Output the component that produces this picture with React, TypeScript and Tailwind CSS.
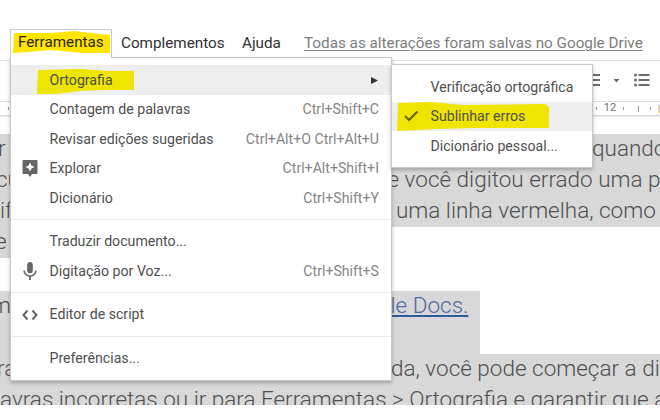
import React from 'react';

type ItemProps = { label: string; keys?: string; icon?: React.ReactNode; active?: boolean; children?: React.ReactNode };

function Item({ label, keys, icon, active, children }: ItemProps) {
  return (
    <div className={`relative flex h-[29.5px] items-center pr-[12px] text-[14.15px] ${active ? 'bg-[#eeeeee]' : ''}`}>
      {children}
      <div className="relative flex w-[38.5px] shrink-0 justify-center text-[#666]">{icon}</div>
      <span className="relative grow pt-[1.5px] text-[#4f4f4f]">{label}</span>
      {keys && <span className="pt-[1.5px] text-[#858585]">{keys}</span>}
    </div>
  );
}

function Separator() {
  return <div className="my-[6.5px] h-px bg-[#ebebeb]" />;
}

function DocLine({ left, right, offset, className = '' }: { left: string; right: string; offset: string; className?: string }) {
  return (
    <div className={`flex h-[31px] w-full shrink-0 overflow-hidden bg-[#d8d8d8] ${className}`}>
      <span className={`shrink-0 ${offset}`}>{left}</span>
      <span>{right}</span>
    </div>
  );
}

function MenuBar() {
  return (
    <div className="flex h-[60px] shrink-0 items-end whitespace-pre pl-[121px] text-[15.25px] text-[#303030]">
      <span className="mb-[5px] w-[121px]">Complementos</span>
      <span className="mb-[5px] w-[62px]">Ajuda</span>
      <span className="mb-[5px] text-[#7d7d7d] underline decoration-1 underline-offset-2">Todas as alterações foram salvas no Google Drive</span>
    </div>
  );
}

function Toolbar() {
  return (
    <div className="flex h-[41px] shrink-0 items-center justify-end border-t border-[#e0e0e0] pr-[8px]">
      <svg width="68" height="18" viewBox="0 0 68 18" fill="#6c6c6c">
        <path d="M0 2h16v2H0zM0 7h16v2H0zM0 12h16v2H0zM29.500 7h6l-3 3.500zM54.500 2h11v2h-11zM54.500 7h11v2h-11zM54.500 12h11v2h-11z" />
        <circle cx="51.500" cy="3" r="1.500" /><circle cx="51.500" cy="8" r="1.500" /><circle cx="51.500" cy="13" r="1.500" />
      </svg>
    </div>
  );
}

function Ruler() {
  return (
    <div className="flex h-[15px] shrink-0 items-center border-y border-[#dadada] text-[11px] text-[#707070] shadow-[0_1px_1px_rgba(0,0,0,0.08)]">
      <i className="ml-[8px] h-[3px] w-px bg-[#999]" />
      <i className="ml-[587px] h-[3px] w-px bg-[#999]" />
      <span className="ml-[7px] w-[12px]">12</span>
      <i className="ml-[7px] h-[3px] w-px bg-[#999]" />
      <i className="ml-[14px] h-[6px] w-px bg-[#999]" />
      <i className="ml-[12px] h-[3px] w-px bg-[#999]" />
      <i className="ml-[7px] h-[8px] w-[2px] bg-[#e5d6ad]" />
    </div>
  );
}

export default function App() {
  return (
    <div className="relative h-[420px] w-[660px] overflow-hidden bg-white font-['Roboto',sans-serif]">
      <div className="flex h-[405px] flex-col overflow-hidden">
        <MenuBar />
        <Toolbar />
        <Ruler />
        <div className="h-[18px] shrink-0" />
        <div className="flex flex-col whitespace-pre text-[22.5px] font-light leading-[29px] text-[#505050]">
          <DocLine left="r" offset="-ml-[2px] w-[594px]" right="quando" />
          <DocLine left="cu" offset="-ml-[4px] w-[379px]" right="de você digitou errado uma p" />
          <DocLine left="if" offset="w-[396px]" right="uma linha vermelha, como" />
          <DocLine left="e" offset="-ml-[5px] w-[391px]" right="" className="max-w-[391px]" />
          <div className="h-[33px] shrink-0" />
          <div className="flex h-[63px] w-[480px] shrink-0 items-start bg-[#d8d8d8]">
            <span className="-ml-[9px] w-[399.5px] shrink-0">m</span>
            <span className="text-[#4c69a0] underline decoration-[#315ba0] decoration-2 underline-offset-2">le Docs.</span>
          </div>
          <DocLine left="ra" offset="-ml-[3px] w-[394px]" right="da, você pode começar a di" />
          <DocLine left="avras incorretas ou ir para Ferramentas > Ortografia e garantir que a" offset="" right="" />
        </div>
      </div>

      <div className="absolute left-[10px] top-[57px] h-[324px] w-[382px] border border-[#c8c8c8] bg-white pt-[7px] shadow-[0_2px_4px_rgba(0,0,0,0.25)]">
        <Item label="Ortografia" active>
          <svg className="absolute left-[26px] top-[4px]" width="98" height="25" viewBox="0 0 98 25" fill="#eee500"><path d="M1 1L43 0 72 2 97 2V21L67 21 43 22 18 25H0Z" /></svg>
          <svg className="absolute right-[13px] top-[12px]" width="8" height="7" fill="#333"><path d="M1 0L8 3.500 1 7Z" /></svg>
        </Item>
        <Item label="Contagem de palavras" keys="Ctrl+Shift+C" />
        <Item label="Revisar edições sugeridas" keys="Ctrl+Alt+O Ctrl+Alt+U" />
        <Item label="Explorar" keys="Ctrl+Alt+Shift+I" icon={<svg width="16" height="17" fill="#666"><path fillRule="evenodd" d="M1.500 0h13q1 0 1 1v12q0 1-1 1H10l-2 3-2-3H1.500q-1 0-1-1V1q0-1 1-1ZM8 2.500 6.600 5.600 3.500 7l3.100 1.400L8 11.500l1.400-3.100L12.500 7 9.400 5.600Z" /></svg>} />
        <Item label="Dicionário" keys="Ctrl+Shift+Y" />
        <Separator />
        <Item label="Traduzir documento..." />
        <Item label="Digitação por Voz..." keys="Ctrl+Shift+S" icon={<svg width="14" height="18" viewBox="5 2 14 19" fill="#666"><path d="M12 14c1.700 0 3-1.300 3-3V5c0-1.700-1.300-3-3-3S9 3.300 9 5v6c0 1.700 1.300 3 3 3ZM17.300 11c0 3-2.500 5.100-5.300 5.100S6.700 14 6.700 11H5c0 3.400 2.700 6.200 6 6.700V21h2v-3.300c3.300-.5 6-3.300 6-6.700Z" /></svg>} />
        <Separator />
        <Item label="Editor de script" icon={<svg className="mt-px" width="16" height="12" fill="none" stroke="#666" strokeWidth="2"><path d="M5.500 1.500 1.500 6l4 4.500M10.500 1.500l4 4.500-4 4.500" /></svg>} />
        <Separator />
        <Item label="Preferências..." />
      </div>

      <div className="absolute left-[10px] top-[29px] h-[29px] w-[102px] border border-b-0 border-[#cccccc] bg-white">
        <svg className="absolute left-[2px] top-[1px]" width="98" height="24" viewBox="0 0 98 24" fill="#ffe500"><path d="M1 2L38 2 62 0 78 2 97 4V22L70 22 37 19 15 21 0 22Z" /></svg>
        <span className="relative ml-[7px] text-[15.25px] leading-[25px] text-[#2b2500]">Ferramentas</span>
      </div>

      <div className="absolute left-[391px] top-[64px] h-[104px] w-[202px] border border-[#c8c8c8] bg-white pt-[7px] shadow-[0_2px_4px_rgba(0,0,0,0.25)]">
        <Item label="Verificação ortográfica" />
        <Item label="Sublinhar erros" active icon={<svg width="15" height="12" fill="none" stroke="#6a6400" strokeWidth="2"><path d="M1 6l4 4L13.500 1.500" /></svg>}>
          <svg className="absolute left-[5px] top-0" width="153" height="29" fill="#eee500"><path d="M1 1L35 0 65 3 148 2 152 5V26L75 26 40 27 0 29Z" /></svg>
        </Item>
        <Item label="Dicionário pessoal..." />
      </div>
    </div>
  );
}
